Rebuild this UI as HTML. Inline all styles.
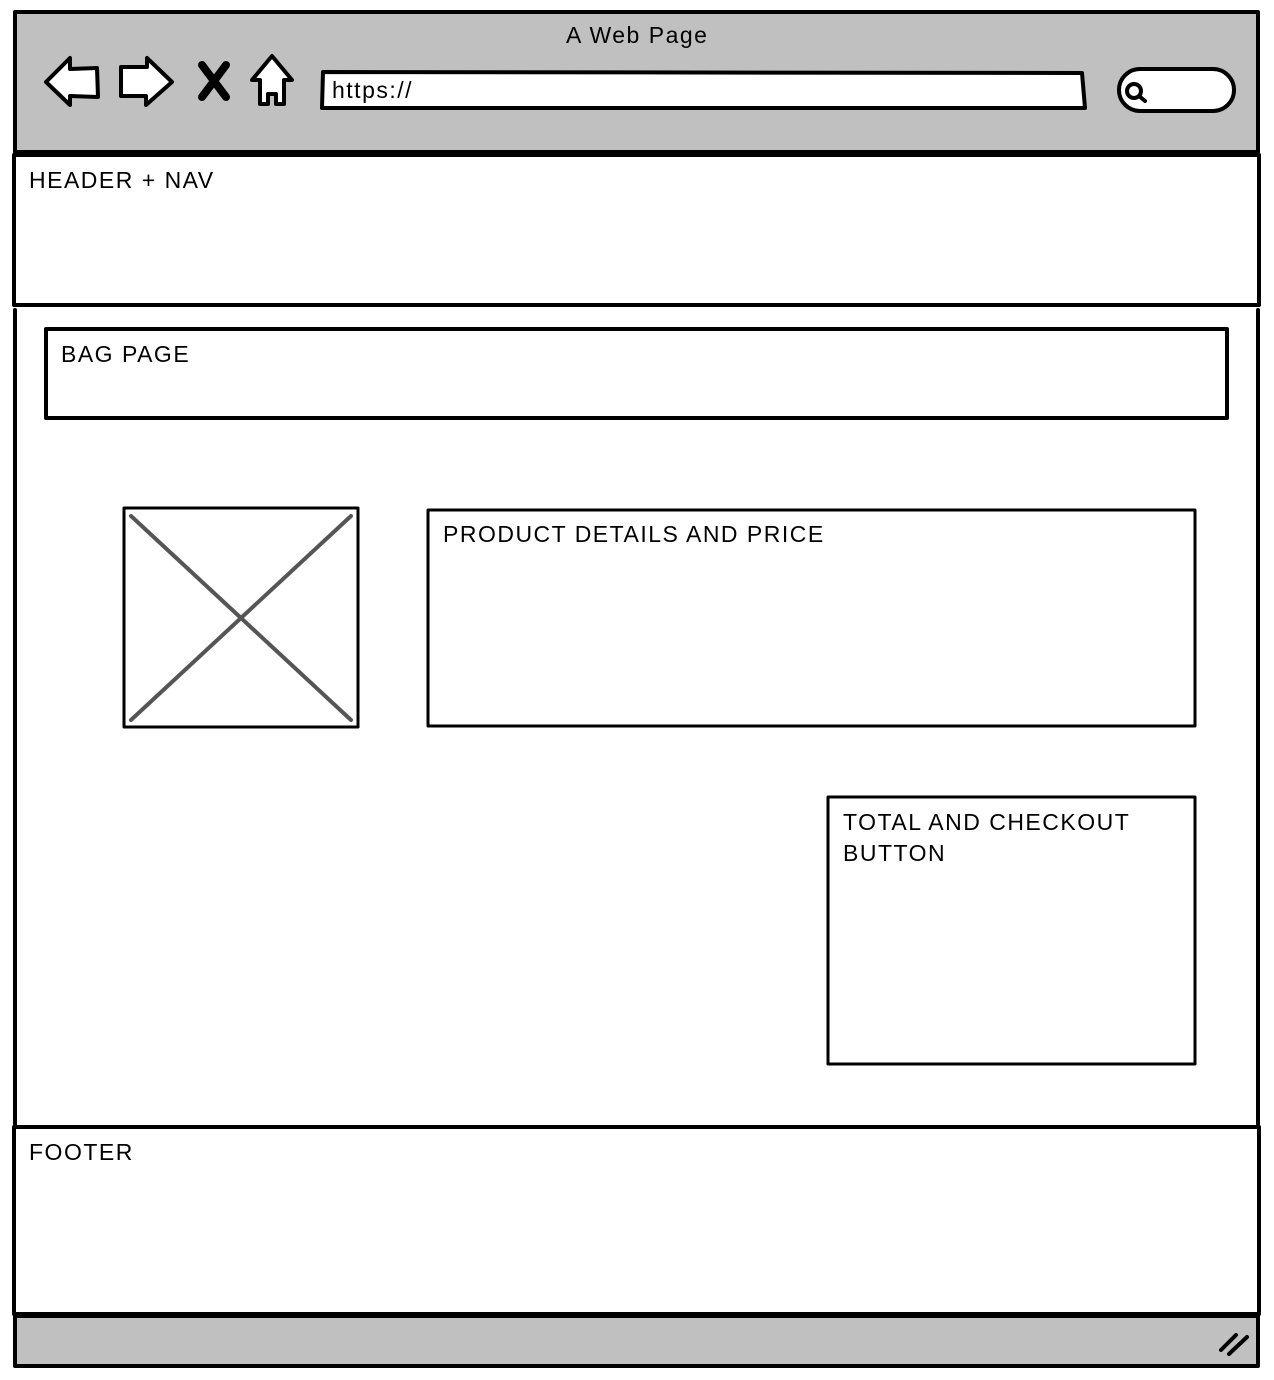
<!DOCTYPE html>
<html><head><meta charset="utf-8"><style>
body{margin:0;width:1274px;height:1380px;background:#fff;font-family:"Liberation Sans",sans-serif;overflow:hidden}
.t{position:absolute;font-size:23px;color:#000;letter-spacing:1.5px}
</style></head><body>
<svg width="1274" height="1380" style="position:absolute;left:0;top:0" fill="none" stroke="#000" stroke-linejoin="round" stroke-linecap="round">
<rect x="15" y="12" width="1243" height="140" fill="#c0c0c0" stroke-width="4"/>
<rect x="15" y="1316" width="1243" height="50" fill="#c0c0c0" stroke-width="4"/>
<rect x="14" y="155" width="1245" height="150" fill="#fff" stroke-width="4"/>
<line x1="15" y1="310" x2="15" y2="1124" stroke-width="4"/>
<line x1="1258" y1="310" x2="1258" y2="1124" stroke-width="4"/>
<rect x="14" y="1127" width="1245" height="187" fill="#fff" stroke-width="4"/>
<rect x="46" y="329" width="1181" height="89" stroke-width="4"/>
<rect x="124" y="508" width="234" height="219" stroke-width="3"/>
<line x1="131" y1="516" x2="351" y2="720" stroke="#555" stroke-width="4"/>
<line x1="351" y1="516" x2="131" y2="720" stroke="#555" stroke-width="4"/>
<rect x="428" y="510" width="767" height="216" stroke-width="3"/>
<rect x="828" y="797" width="367" height="267" stroke-width="3"/>
<path d="M46 82 L70 58 L70 69 L97 68 L98 97 L70 96 L70 105 Z" fill="#fff" stroke-width="4"/>
<path d="M172 82 L147 58 L147 67 L121 67 L121 96 L146 96 L146 105 Z" fill="#fff" stroke-width="4"/>
<path d="M202 65 L226 97 M226 65 L202 97" stroke-width="8"/>
<path d="M272 56 L292 80 L284 80 L284 104 L276 104 L276 94 L268 94 L268 104 L260 104 L260 80 L252 80 Z" fill="#fff" stroke-width="4"/>
<path d="M323 72 L1082 73 L1085 108 L322 108 Z" fill="#fff" stroke-width="4"/>
<rect x="1119" y="69" width="115" height="42" rx="21" fill="#fff" stroke-width="4"/>
<circle cx="1134" cy="91" r="7" stroke-width="4"/>
<line x1="1139" y1="96" x2="1145" y2="101" stroke-width="4"/>
<path d="M1221 1350 L1236 1335 M1229 1354 L1247 1337" stroke-width="4"/>
</svg>
<div class="t" style="left:566px;top:22px">A Web Page</div>
<div class="t" style="left:332px;top:77px">https://</div>
<div class="t" style="left:29px;top:167px">HEADER + NAV</div>
<div class="t" style="left:61px;top:341px">BAG PAGE</div>
<div class="t" style="left:443px;top:521px">PRODUCT DETAILS AND PRICE</div>
<div class="t" style="left:843px;top:807px;line-height:31px">TOTAL AND CHECKOUT<br>BUTTON</div>
<div class="t" style="left:29px;top:1139px">FOOTER</div>
</body></html>
